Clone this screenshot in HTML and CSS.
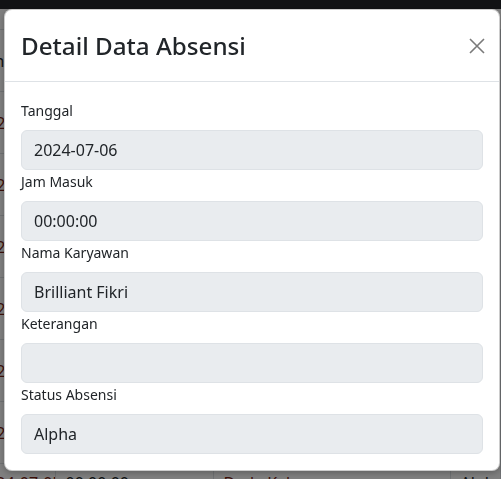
FILE: index.html
```html
<!DOCTYPE html>
<html lang="id">
<head>
<meta charset="utf-8">
<title>Detail Data Absensi</title>
<link rel="stylesheet" href="styles.css">
</head>
<body>
<div class="page">
  <div class="navbar"></div>
  <table class="bg-table">
    <tr><td class="c1">Tanggal</td><td class="c2">Jam Masuk</td><td class="c3">Nama Karyawan</td><td class="c4">Status</td></tr>
    <tr><td class="c1 link">2024-07-01</td><td class="c2">00:00:00</td><td class="c3 link">Dede Kak</td><td class="c4">Alpha</td></tr>
    <tr><td class="c1 link">2024-07-02</td><td class="c2">00:00:00</td><td class="c3 link">Dede Kak</td><td class="c4">Alpha</td></tr>
    <tr><td class="c1 link">2024-07-03</td><td class="c2">00:00:00</td><td class="c3 link">Dede Kak</td><td class="c4">Alpha</td></tr>
    <tr><td class="c1 link">2024-07-04</td><td class="c2">00:00:00</td><td class="c3 link">Dede Kak</td><td class="c4">Alpha</td></tr>
    <tr><td class="c1 link">2024-07-05</td><td class="c2">00:00:00</td><td class="c3 link">Dede Kak</td><td class="c4">Alpha</td></tr>
    <tr><td class="c1 link">2024-07-06</td><td class="c2">00:00:00</td><td class="c3 link">Dede Kak</td><td class="c4">Alpha</td></tr>
    <tr><td class="c1 link">2024-07-05</td><td class="c2">00:00:00</td><td class="c3 link">Dede Kak</td><td class="c4">Alpha</td></tr>
  </table>
</div>
<div class="backdrop"></div>
<div class="modal">
  <div class="modal-header">
    <h2 class="modal-title">Detail Data Absensi</h2>
    <button class="btn-close" type="button" aria-label="Close">
      <svg width="16" height="16" viewBox="0 0 16 16"><path d="M1 1 L15 15 M15 1 L1 15" stroke="#7a7a7a" stroke-width="1.6" fill="none"/></svg>
    </button>
  </div>
  <div class="modal-body">
    <div class="field">
      <label class="label">Tanggal</label>
      <div class="control">2024-07-06</div>
    </div>
    <div class="field">
      <label class="label">Jam Masuk</label>
      <div class="control">00:00:00</div>
    </div>
    <div class="field">
      <label class="label">Nama Karyawan</label>
      <div class="control">Brilliant Fikri</div>
    </div>
    <div class="field">
      <label class="label">Keterangan</label>
      <div class="control"></div>
    </div>
    <div class="field">
      <label class="label">Status Absensi</label>
      <div class="control">Alpha</div>
    </div>
  </div>
</div>
</body>
</html>
```
FILE: styles.css
```css
* { box-sizing: border-box; }
html, body { margin: 0; padding: 0; }
body {
  font-family: "Noto Sans", "Open Sans", sans-serif;
  color: #212529;
  background: #fff;
  width: 501px;
  height: 479px;
  overflow: hidden;
}
.page { width: 501px; height: 479px; overflow: hidden; }
.navbar { height: 9px; background: #232529; margin-bottom: 20px; }
.bg-table {
  border-collapse: collapse;
  width: 501px;
  font-size: 16px;
  table-layout: fixed;
}
.bg-table td {
  border-top: 1px solid #dee2e6;
  border-right: 1px solid #dee2e6;
  height: 62px;
  padding: 8px 10px;
  vertical-align: middle;
  white-space: nowrap;
  overflow: hidden;
}
.bg-table tr:last-child td { vertical-align: top; padding-top: 8px; }
.bg-table .c1 { width: 55px; padding-left: 0; text-indent: -22px; }
.bg-table .c2 { width: 158px; }
.bg-table .c3 { width: 237px; }
.bg-table .link { color: #7a1d12; }
.backdrop {
  position: fixed;
  inset: 0;
  background: rgba(0, 0, 0, 0.5);
}
.modal {
  position: fixed;
  top: 9px;
  left: 4px;
  width: 496px;
  background: #fff;
  border: 1px solid rgba(0, 0, 0, 0.2);
  border-radius: 8px;
  box-shadow: 0 2px 6px rgba(0, 0, 0, 0.25);
}
.modal-header {
  display: flex;
  align-items: center;
  justify-content: space-between;
  height: 72px;
  padding: 0 14px 0 16px;
  border-bottom: 1px solid #dee2e6;
}
.modal-title {
  margin: 0;
  font-size: 24.2px;
  font-weight: 500;
  line-height: 1.2;
  color: #212529;
}
.btn-close {
  border: 0;
  background: transparent;
  padding: 0;
  width: 16px;
  height: 16px;
  display: flex;
}
.modal-body { padding: 17px 16px 16px; }
.field { display: flex; flex-direction: column; }
.label {
  font-size: 14px;
  line-height: 23px;
  margin-bottom: 8px;
  color: #212529;
}
.control {
  height: 40px;
  display: flex;
  align-items: center;
  padding: 0 12px;
  background: #e9ecef;
  border: 1px solid #dee2e6;
  border-radius: 6px;
  font-size: 16px;
  color: #212529;
}
```
